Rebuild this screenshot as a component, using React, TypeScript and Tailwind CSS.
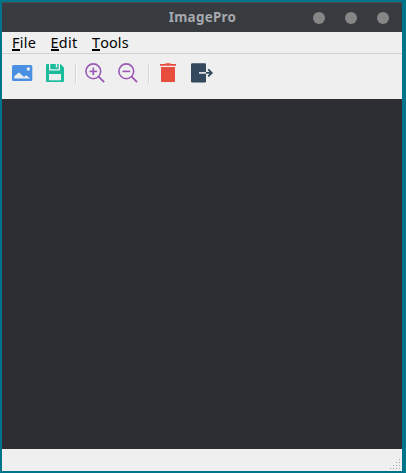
import React from "react";

const menus = [
  { label: "File", width: "w-[38.5px]", spacing: "tracking-[0.3px]" },
  { label: "Edit", width: "w-[41.5px]", spacing: "tracking-[0.3px]" },
  { label: "Tools", width: "w-[48px]", spacing: "tracking-[0.15px]" },
];

const gripRows = [1, 2, 3, 4];

function ImageIcon() {
  return (
    <svg width="21" height="16" viewBox="0 0 21 16" className="mt-[11px]">
      <rect width="20.3" height="16" rx="1.5" fill="#4a90e2" />
      <circle cx="16.3" cy="4" r="1.7" fill="#efefef" />
      <path d="M2.3 13.5V11.2L7 7.6l5 4.4 2.3-1.7 3.9 3.2Z" fill="#efefef" />
    </svg>
  );
}

function SaveIcon() {
  return (
    <svg width="18" height="18" viewBox="0 0 18 18" className="ml-[13px] mt-[10px]">
      <path d="M1 0h13.5L18 3.5V17a1 1 0 0 1-1 1H1a1 1 0 0 1-1-1V1a1 1 0 0 1 1-1Z" fill="#1abc9c" />
      <path d="M3 0h1.3v5.2h8.4V0H14v6.5H3ZM9.8 0h1.4v3.6H9.8Z" fill="#efefef" />
      <rect x="3" y="10" width="12" height="6.3" fill="#efefef" />
    </svg>
  );
}

function Zoom({ plus = false }: { plus?: boolean }) {
  return (
    <svg width="20" height="20" viewBox="0 0 20 20" fill="none" stroke="#9b59b6" strokeWidth="1.6">
      <circle cx="8.3" cy="8.3" r="7.4" />
      <path d="m13.6 13.6 5.5 5.5" strokeWidth="1.9" />
      <path d="M4.5 8.4h7.6" />
      {plus && <path d="M8.3 4.6v7.6" />}
    </svg>
  );
}

function TrashIcon() {
  return (
    <svg width="16" height="19" viewBox="0 0 16 19" fill="#e74c3c" className="ml-[10px] mt-[9px]">
      <path d="M5.5.3h5v.8H16v1.6H0V1.1h5.5Z" />
      <path d="M1 4h14v14a1 1 0 0 1-1 1H2a1 1 0 0 1-1-1Z" />
    </svg>
  );
}

function ExitIcon() {
  return (
    <svg width="23" height="20" viewBox="0 0 23 20" className="ml-[15px] mt-[9px]">
      <rect y="0.2" width="15" height="19.3" rx="1.2" fill="#34495e" />
      <path d="M8 9.9h7" stroke="#efefef" strokeWidth="1.6" />
      <path d="M15 9.9h6M17.2 6.4l3.5 3.5-3.5 3.5" stroke="#34495e" strokeWidth="1.9" fill="none" />
    </svg>
  );
}

function Separator({ className }: { className: string }) {
  return <div className={`mt-[10px] h-[19px] w-[2px] border-l border-[#d3d3d3] bg-[#fafafa] ${className}`} />;
}

export default function App() {
  return (
    <main className="h-[473px] w-[406px] bg-[#00748a] pl-[2px] pt-[2px] font-['Noto_Sans','Open_Sans',sans-serif]">
      <section className="flex h-[469px] w-[400px] flex-col bg-[#efefef]">
        <header className="grid h-[30px] shrink-0 grid-cols-[1fr_70px_1fr] items-center border-t border-[#4b4d50] bg-[#383b3f]">
          <h1 className="col-start-2 whitespace-nowrap pl-px text-center text-[13.4px] font-bold leading-[29px] tracking-[0.3px] text-[#a6a9ad]">ImagePro</h1>
          <div className="flex justify-end gap-[20px] pr-[13px]">
            <span className="size-[12px] rounded-full bg-[#868686]" />
            <span className="size-[12px] rounded-full bg-[#868686]" />
            <span className="size-[12px] rounded-full bg-[#868686]" />
          </div>
        </header>
        <nav className="flex h-[22px] shrink-0 border-b border-[#d2d2d2] pl-[10px] text-[14.4px] leading-[22px] text-black">
          {menus.map(({ label, width, spacing }) => (
            <button key={label} className={`flex items-start text-left ${width} ${spacing}`}>
              <span className="h-[19px] border-b-2 border-black">{label[0]}</span>
              <span>{label.slice(1)}</span>
            </button>
          ))}
        </nav>
        <div className="flex h-[45px] shrink-0 items-start pl-[10px]">
          <ImageIcon />
          <SaveIcon />
          <Separator className="ml-[11px]" />
          <div className="ml-[8px] mt-[9px] flex gap-[13px]">
            <Zoom plus />
            <Zoom />
          </div>
          <Separator className="ml-[10px]" />
          <TrashIcon />
          <ExitIcon />
        </div>
        <div className="h-[350px] shrink-0 bg-[#2d2e33]" />
        <footer className="flex h-[22px] shrink-0 items-end justify-end pb-[2px] pr-[2px]">
          <div className="flex flex-col items-end gap-[2px]">
            {gripRows.map((count) => (
              <div key={count} className="flex gap-[2px]">
                {Array.from({ length: count }, (_, index) => (
                  <i key={index} className="size-px bg-[#a5a5a5]" />
                ))}
              </div>
            ))}
          </div>
        </footer>
      </section>
    </main>
  );
}
